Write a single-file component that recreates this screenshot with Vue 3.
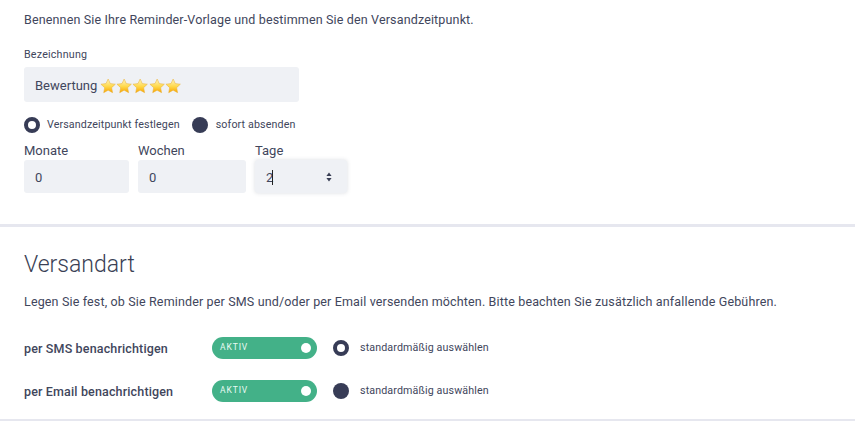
<template>
  <div class="page">
    <section class="block first">
      <p class="intro">Benennen Sie Ihre Reminder-Vorlage und bestimmen Sie den Versandzeitpunkt.</p>

      <label class="small-label">Bezeichnung</label>
      <div class="name-field">
        <span>Bewertung</span>
        <span class="stars">
          <svg v-for="n in 5" :key="n" class="star" viewBox="0 0 24 24">
            <defs>
              <linearGradient :id="'star' + n" x1="0" y1="0" x2="0" y2="1">
                <stop offset="0" stop-color="#fff6c4" />
                <stop offset="0.55" stop-color="#ffd84a" />
                <stop offset="1" stop-color="#f9a400" />
              </linearGradient>
            </defs>
            <path
              d="M12 1.5l3.2 6.9 7.6.9-5.6 5.2 1.5 7.5L12 18.3l-6.7 3.7 1.5-7.5L1.2 9.3l7.6-.9z"
              :fill="'url(#star' + n + ')'"
              stroke="#e8b23a"
              stroke-width="0.8"
            />
          </svg>
        </span>
      </div>

      <div class="radio-row">
        <span class="radio on"></span>
        <span class="radio-text">Versandzeitpunkt festlegen</span>
        <span class="radio off second"></span>
        <span class="radio-text">sofort absenden</span>
      </div>

      <div class="time-row">
        <div v-for="field in timeFields" :key="field.label" class="time-col" :class="field.cls">
          <div class="time-label">{{ field.label }}</div>
          <div class="time-input">
            <span>{{ field.value }}</span>
            <span v-if="field.active" class="caret"></span>
            <svg v-if="field.active" class="spinner" viewBox="0 0 6 10">
              <path d="M3 0.5L5.6 4H0.4zM3 9.5L0.4 6h5.2z" fill="#3a3f55" />
            </svg>
          </div>
        </div>
      </div>
    </section>

    <section class="block second-block">
      <h2>Versandart</h2>
      <p class="intro">Legen Sie fest, ob Sie Reminder per SMS und/oder per Email versenden möchten. Bitte beachten Sie zusätzlich anfallende Gebühren.</p>

      <div v-for="row in channels" :key="row.label" class="channel">
        <div class="channel-name">{{ row.label }}</div>
        <div class="toggle">
          <span class="toggle-text">AKTIV</span>
          <span class="knob"></span>
        </div>
        <span class="radio" :class="row.selected ? 'on' : 'off'"></span>
        <span class="radio-text default">standardmäßig auswählen</span>
      </div>
    </section>
  </div>
</template>

<script setup>
const timeFields = [
  { label: 'Monate', value: '0', cls: 'months' },
  { label: 'Wochen', value: '0', cls: 'weeks' },
  { label: 'Tage', value: '2', cls: 'days', active: true },
];

const channels = [
  { label: 'per SMS benachrichtigen', selected: true },
  { label: 'per Email benachrichtigen', selected: false },
];
</script>

<style>
html, body {
  margin: 0;
  background: #fff;
}
</style>

<style scoped>
.page {
  width: 855px;
  height: 425px;
  overflow: hidden;
  font-family: Roboto, "Noto Sans", sans-serif;
  color: #41465c;
  background: #fff;
}

.block {
  padding: 0 24px;
  border-bottom: 3px solid #e6e7ef;
}

.first {
  height: 227px;
  box-sizing: border-box;
  padding-top: 12px;
}

.second-block {
  height: 194px;
  box-sizing: border-box;
  padding-top: 23px;
  border-bottom-width: 2px;
}

.intro {
  margin: 0;
  font-size: 12.5px;
  line-height: 16px;
  letter-spacing: 0.15px;
}

.small-label {
  display: block;
  margin-top: 20px;
  font-size: 10.7px;
  line-height: 14px;
  letter-spacing: 0.2px;
}

.name-field {
  display: flex;
  align-items: center;
  width: 275px;
  height: 35px;
  box-sizing: border-box;
  margin-top: 5px;
  padding: 2px 0 0 11px;
  background: #eff1f5;
  border-radius: 3px;
  font-size: 13px;
}

.stars {
  display: flex;
  margin-left: 2.5px;
}

.star {
  width: 16.3px;
  height: 16px;
}

.radio-row {
  display: flex;
  align-items: center;
  margin-top: 15px;
}

.radio {
  flex: none;
  width: 16px;
  height: 16px;
  box-sizing: border-box;
  border-radius: 50%;
  background: #373c56;
}

.radio.on {
  background: #fff;
  border: 4px solid #373c56;
}

.radio-text {
  margin-left: 7px;
  font-size: 10.7px;
  line-height: 16px;
  letter-spacing: 0.12px;
}

.second {
  margin-left: 12px;
}

.second + .radio-text {
  margin-left: 8px;
}

.time-row {
  display: flex;
  margin-top: 10px;
}

.time-label {
  font-size: 13px;
  line-height: 16px;
  margin-bottom: 1px;
}

.months {
  width: 105px;
  margin-right: 9px;
}

.weeks {
  width: 108px;
  margin-right: 9px;
}

.days {
  width: 92px;
}

.time-input {
  position: relative;
  display: flex;
  align-items: center;
  height: 33px;
  box-sizing: border-box;
  padding: 2px 0 0 11px;
  background: #eff1f5;
  border-radius: 3px;
  font-size: 13px;
}

.days .time-input {
  box-shadow: 0 0 4px rgba(60, 70, 100, 0.18);
}

.caret {
  width: 1px;
  height: 15px;
  margin-left: -1px;
  background: #222;
}

.spinner {
  position: absolute;
  right: 15px;
  top: 12px;
  width: 6px;
  height: 10px;
}

h2 {
  margin: 0;
  font-family: Roboto, sans-serif;
  font-size: 23px;
  font-weight: 300;
  line-height: 30px;
  color: #3a3f55;
}

.second-block .intro {
  margin-top: 14px;
  margin-bottom: 27px;
}

.channel {
  display: flex;
  align-items: center;
  height: 22px;
  margin-bottom: 21px;
}

.channel-name {
  width: 188px;
  font-size: 12.5px;
  font-weight: 500;
  letter-spacing: 0.15px;
}

.toggle {
  display: flex;
  align-items: center;
  justify-content: space-between;
  width: 105px;
  height: 22px;
  box-sizing: border-box;
  padding: 0 6px 0 8px;
  margin-right: 16px;
  background: #43b188;
  border-radius: 11px;
}

.toggle-text {
  color: #eafaf3;
  font-size: 8.5px;
  letter-spacing: 0.9px;
  margin-top: -2px;
}

.knob {
  width: 10px;
  height: 10px;
  background: #fff;
  border-radius: 50%;
}

.default {
  margin-left: 11px;
}
</style>
